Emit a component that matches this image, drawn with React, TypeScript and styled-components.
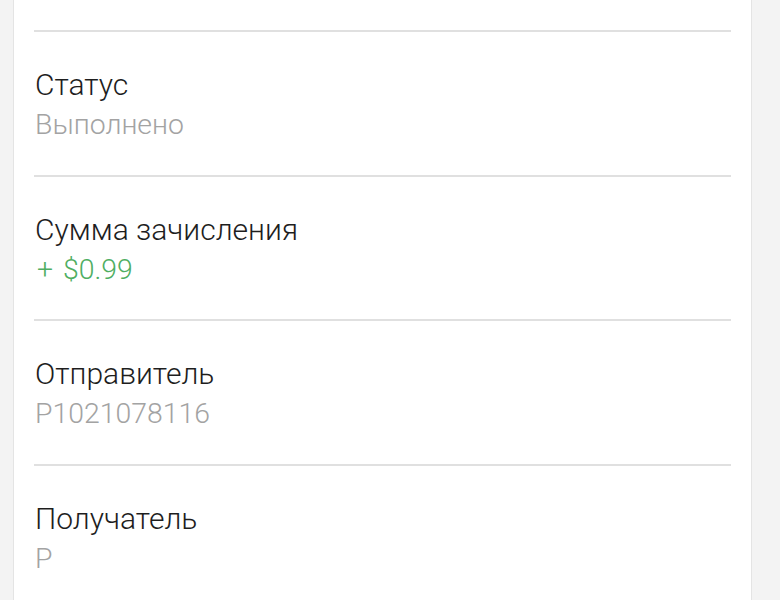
import styled, { createGlobalStyle } from 'styled-components'

const GlobalStyle = createGlobalStyle`
  html, body {
    margin: 0;
    padding: 0;
    background: #f3f3f3;
    font-family: Roboto, "Noto Sans", sans-serif;
  }
`

interface DetailRowProps {
  label: string;
  value: string;
  tone?: 'muted' | 'green';
}

const Card = styled.div`
  margin: 0 28px 0 13px;
  min-height: 600px;
  background: #fff;
  border-left: 1px solid #e4e4e4;
  border-right: 1px solid #e4e4e4;
  padding: 30px 20px 0 20px;
  box-sizing: border-box;
`

const Row = styled.div`
  border-top: 2px solid #e0e0e0;
  padding: 33px 0 30px 1px;
  height: 144.5px;
  box-sizing: border-box;
`

const Label = styled.div`
  font-size: 30px;
  font-weight: 300;
  line-height: 40px;
  color: #1e1e1e;
`

const Value = styled.div<{ $tone: 'muted' | 'green' }>`
  font-size: 28.4px;
  font-weight: 300;
  line-height: 40px;
  word-spacing: ${(p) => (p.$tone === 'green' ? '3px' : '0')};
  padding-left: ${(p) => (p.$tone === 'green' ? '2px' : '0')};
  color: ${(p) => (p.$tone === 'green' ? '#4fae62' : '#a3a3a3')};
`

const DetailRow = ({ label, value, tone = 'muted' }: DetailRowProps) => (
  <Row>
    <Label>{label}</Label>
    <Value $tone={tone}>{value}</Value>
  </Row>
)

const App = () => {
  return (
    <>
      <GlobalStyle />
      <Card>
        <DetailRow label="Статус" value="Выполнено" />
        <DetailRow label="Сумма зачисления" value="+ $0.99" tone="green" />
        <DetailRow label="Отправитель" value="P1021078116" />
        <DetailRow label="Получатель" value="P" />
      </Card>
    </>
  )
}

export default App
